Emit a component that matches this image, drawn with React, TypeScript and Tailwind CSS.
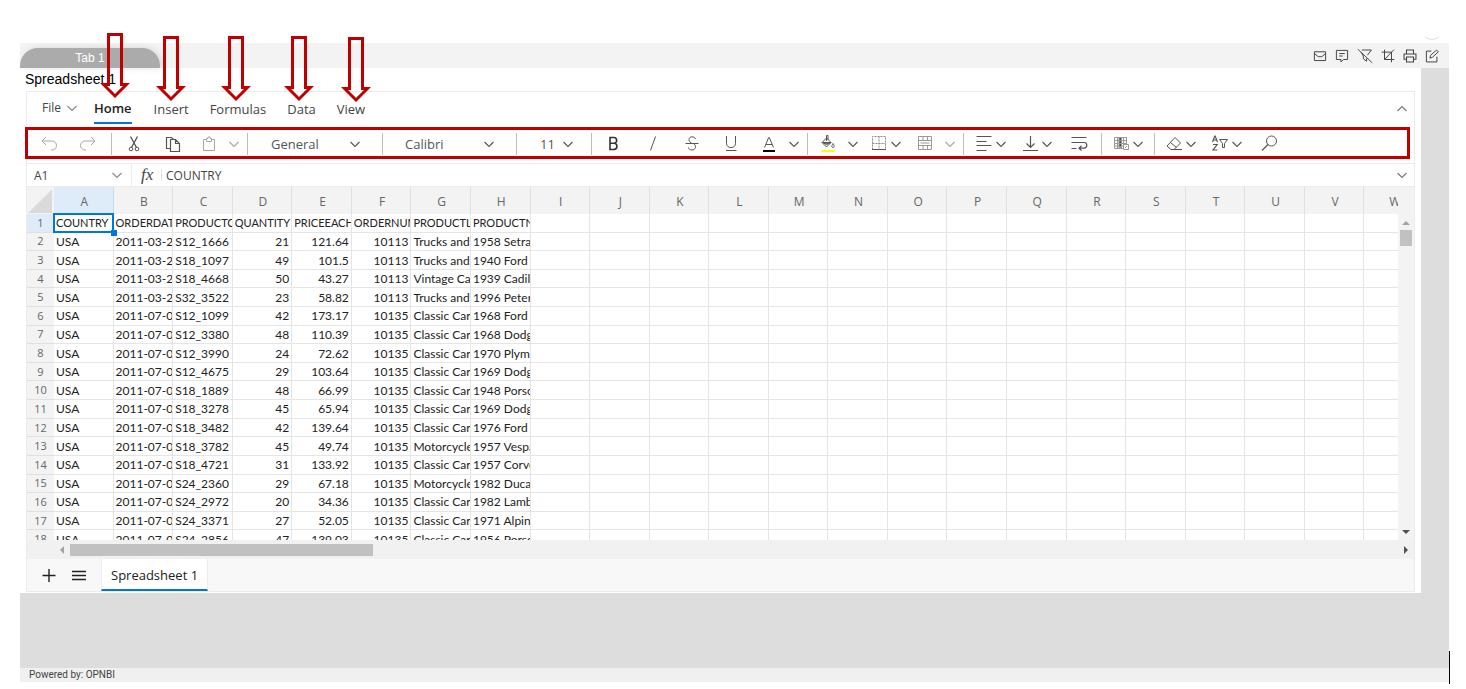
import type { ReactNode } from 'react'

type IconProps = { children: ReactNode; className?: string }

function Icon({ children, className = 'w-5 h-5' }: IconProps) {
  return (
    <svg viewBox="0 0 20 20" fill="none" stroke="currentColor" strokeWidth={1} className={className} aria-hidden="true">
      {children}
    </svg>
  )
}

function Chevron({ up = false }: { up?: boolean }) {
  return (
    <svg viewBox="0 0 14 14" fill="none" stroke="currentColor" className="w-3.5 h-3.5 shrink-0" aria-hidden="true">
      <path d={up ? 'M2.5 9 7 4.5 11.5 9' : 'M2.5 5 7 9.5 11.5 5'} strokeWidth={1.1} />
    </svg>
  )
}

function Tool({ label, className = '', children }: { label: string; className?: string; children: ReactNode }) {
  return (
    <button aria-label={label} className={`w-5 h-5 shrink-0 ${className}`}>
      <Icon>{children}</Icon>
    </button>
  )
}

function Drop({ label, className = '' }: { label: string; className?: string }) {
  return (
    <button aria-label={label} className={`w-3.5 h-5 shrink-0 flex items-center ${className}`}>
      <Chevron />
    </button>
  )
}

function Sep({ className }: { className: string }) {
  return <span className={`w-px h-[22px] shrink-0 bg-[#bdbdbd] ${className}`} />
}

function Picker({ label, value, className }: { label: string; value: string; className: string }) {
  return (
    <label className={`flex items-center shrink-0 text-[13px] ${className}`}>
      <select aria-label={label} defaultValue={value} className="appearance-none flex-1 min-w-0 pt-px bg-transparent outline-none">
        <option>{value}</option>
      </select>
      <Chevron />
    </label>
  )
}

function Toolbar() {
  return (
    <div className="-ml-0.5 mr-1 mt-0.5 h-8 pt-0.5 border-[3px] border-[#c00000] flex items-center overflow-hidden text-[#555]">
      <Tool label="Undo" className="ml-[11px] text-[#a6a6a6]">
        <path d="M7 3 3 7l4 4M3.2 7H13a4.500 4.500 0 0 1 0 9h-1" />
      </Tool>
      <Tool label="Redo" className="ml-[19px] text-[#a6a6a6]">
        <path d="M13 3l4 4-4 4M16.800 7H7a4.500 4.500 0 0 0 0 9h1" />
      </Tool>
      <Sep className="ml-[13px]" />
      <Tool label="Cut" className="ml-3">
        <path d="M6.500 2.500 12.500 13.500M13.500 2.500 7.500 13.500" strokeWidth={1.3} />
        <circle cx="7" cy="15" r="1.800" />
        <circle cx="13" cy="15" r="1.800" />
      </Tool>
      <Tool label="Copy" className="ml-[19px]">
        <path d="M7.500 14.500H3.500v-11h5l2 2M7.500 5.500h5l4 4v8h-9zM12.500 5.500v4h4" strokeWidth={1.2} />
      </Tool>
      <Tool label="Paste" className="ml-4 text-[#a6a6a6]">
        <path d="M7.500 5.500h-3v11h11v-11h-3M7.500 4.500h1.500v-1.500h2v1.500h1.500v3h-5z" />
      </Tool>
      <Drop label="Paste options" className="ml-2 text-[#a6a6a6]" />
      <Sep className="ml-1.5" />
      <Picker label="Number format" value="General" className="ml-[23px] w-[91px]" />
      <Sep className="ml-5" />
      <Picker label="Font family" value="Calibri" className="ml-[22px] w-[91px]" />
      <Sep className="ml-5" />
      <Picker label="Font size" value="11" className="ml-[23px] w-[35px]" />
      <Sep className="ml-4" />
      <Tool label="Bold" className="ml-3 text-[#333]">
        <path d="M6 3.500v12h4a3.200 3.200 0 0 0 .5-6.300A2.900 2.900 0 0 0 10 3.500zM6 9.200h4.500" strokeWidth={1.600} />
      </Tool>
      <Tool label="Italic" className="ml-[19px]">
        <path d="M12.500 2.500 7.500 16.500" />
      </Tool>
      <Tool label="Strikethrough" className="ml-[19px]">
        <path d="M13.500 5C13 2 7 2 7 5.500c0 2 1.500 3 3 4M3.500 9.500h13M12 10c3 2 1.500 6-2 6-2 0-3.500-1-3.500-2.500" />
      </Tool>
      <Tool label="Underline" className="ml-[19px]">
        <path d="M5.500 2v7.500c0 5.500 9 5.500 9 0V2M5 16.500h10.500" />
      </Tool>
      <Tool label="Text color" className="ml-[18px]">
        <path d="M5.500 13.500 9.700 3.500h.6L14.500 13.500M7 10.500h6" />
        <path d="M4 17h12" stroke="#000" strokeWidth={2} />
      </Tool>
      <Drop label="Text color options" className="ml-2" />
      <Sep className="ml-1.5" />
      <Tool label="Fill color" className="ml-2.5">
        <path d="M4 8.500 8.500 4l4.500 4.500L8.500 13zM8.500 7V1.500H10V6" />
        <path d="M4.500 8.500H13L8.500 10.500z" fill="#777" />
        <path d="M15 9.500c2 3 1 4 0 4s-2-1 0-4z" />
        <path d="M3.500 17h13" stroke="#ff0" strokeWidth={2} />
      </Tool>
      <Drop label="Fill color options" className="ml-2" />
      <Tool label="Borders" className="ml-[9px]">
        <path d="M3.500 15.500V2.500h13v13M10 2.500v13M3.500 9.500h13" stroke="#888" strokeDasharray="2 1" />
        <path d="M3 15.500h14" />
      </Tool>
      <Drop label="Border options" />
      <Tool label="Merge cells" className="ml-3 text-[#999]">
        <path d="M3.500 2.500h13v13h-13zM3.500 6.500h13M3.500 11.500h13M8 2.500v4M12.500 2.500v4M8 11.500v4M12.500 11.500v4M5.500 9h9" />
      </Tool>
      <Drop label="Merge options" className="ml-2 text-[#a6a6a6]" />
      <Sep className="ml-1.5" />
      <Tool label="Horizontal alignment" className="ml-2.5">
        <path d="M2.500 2.500h15M2.500 7.500h10M2.500 11.500h15M2.500 16.500h10" />
      </Tool>
      <Drop label="Horizontal alignment options" />
      <Tool label="Vertical alignment" className="ml-3">
        <path d="M10.500 2v11.500M6.500 9.500l4 4 4-4M3 16.500h15" strokeWidth={1.200} />
      </Tool>
      <Drop label="Vertical alignment options" />
      <Tool label="Wrap text" className="ml-[15px]">
        <path d="M2.500 3.500h15M2.500 8.500h12.500a2.800 2.800 0 0 1 0 5.600H10M2.500 14.500h5M12.500 11.800l-2.500 2.400 2.500 2.300" strokeWidth={1.200} />
      </Tool>
      <Sep className="ml-3" />
      <Tool label="Freeze panes" className="ml-[9px]">
        <path d="M3.500 3.500h12v11h-12zM3.500 6.500h12M3.500 9.500h12M3.500 12h12M6.500 3.500v11M12.500 3.500v11" stroke="#999" />
        <path d="M7.500 4h3.500v10H7.500z" fill="#999" stroke="none" />
        <path d="M8.500 5h1.500M8.500 8h1.500M8.500 11h1.500" stroke="#333" strokeWidth={1.500} />
        <path d="M12.500 10.500h5v5h-5zM14 14l2-2" fill="#fff" stroke="#999" />
      </Tool>
      <Drop label="Freeze options" />
      <Sep className="ml-[9px]" />
      <Tool label="Clear" className="ml-[9px]">
        <path d="M3 12 11 3.500l5.500 5.500L10 15.500H7zM6.500 8.500l6 5M9 15.500h9" />
      </Tool>
      <Drop label="Clear options" />
      <Tool label="Sort and filter" className="ml-3">
        <path d="M2.500 8 4.800 2h.4L7.500 8M3.200 6h3.600M3 10.500h4.200L3 16h4.500" strokeWidth={1.200} />
        <path d="M9.500 5.500h8l-3 4v4h-2v-4z" />
      </Tool>
      <Drop label="Sort options" />
      <Tool label="Find" className="ml-[15px]">
        <circle cx="12.500" cy="7" r="5" />
        <path d="M9 10.500 3 16.500" strokeWidth={1.200} />
      </Tool>
    </div>
  )
}

const columns = 'ABCDEFGHIJKLMNOPQRSTUVW'.split('')

const rows: string[][] = [
  ['COUNTRY', 'ORDERDATE', 'PRODUCTCODE', 'QUANTITY', 'PRICEEACH', 'ORDERNUMBER', 'PRODUCTLINE', 'PRODUCTNAME'],
  ['USA', '2011-03-26', 'S12_1666', '21', '121.64', '10113', 'Trucks and Buses', '1958 Setra Bus'],
  ['USA', '2011-03-26', 'S18_1097', '49', '101.5', '10113', 'Trucks and Buses', '1940 Ford Pickup'],
  ['USA', '2011-03-26', 'S18_4668', '50', '43.27', '10113', 'Vintage Cars', '1939 Cadillac'],
  ['USA', '2011-03-26', 'S32_3522', '23', '58.82', '10113', 'Trucks and Buses', '1996 Peterbilt'],
  ['USA', '2011-07-02', 'S12_1099', '42', '173.17', '10135', 'Classic Cars', '1968 Ford Mustang'],
  ['USA', '2011-07-02', 'S12_3380', '48', '110.39', '10135', 'Classic Cars', '1968 Dodge Charger'],
  ['USA', '2011-07-02', 'S12_3990', '24', '72.62', '10135', 'Classic Cars', '1970 Plymouth'],
  ['USA', '2011-07-02', 'S12_4675', '29', '103.64', '10135', 'Classic Cars', '1969 Dodge Charger'],
  ['USA', '2011-07-02', 'S18_1889', '48', '66.99', '10135', 'Classic Cars', '1948 Porsche'],
  ['USA', '2011-07-02', 'S18_3278', '45', '65.94', '10135', 'Classic Cars', '1969 Dodge'],
  ['USA', '2011-07-02', 'S18_3482', '42', '139.64', '10135', 'Classic Cars', '1976 Ford Gran'],
  ['USA', '2011-07-02', 'S18_3782', '45', '49.74', '10135', 'Motorcycles', '1957 Vespa'],
  ['USA', '2011-07-02', 'S18_4721', '31', '133.92', '10135', 'Classic Cars', '1957 Corvette'],
  ['USA', '2011-07-02', 'S24_2360', '29', '67.18', '10135', 'Motorcycles', '1982 Ducati'],
  ['USA', '2011-07-02', 'S24_2972', '20', '34.36', '10135', 'Classic Cars', '1982 Lamborghini'],
  ['USA', '2011-07-02', 'S24_3371', '27', '52.05', '10135', 'Classic Cars', '1971 Alpine'],
  ['USA', '2011-07-02', 'S24_2856', '47', '139.03', '10135', 'Classic Cars', '1956 Porsche'],
]

function Sheet() {
  return (
    <div className="flex-1 min-w-0 overflow-hidden h-[353px]">
      <table className="table-fixed border-separate border-spacing-0 w-[1397px] h-[362px]">
        <colgroup>
          <col className="w-[27px]" />
        </colgroup>
        <thead>
          <tr className="h-[27px] text-xs text-[#666]">
            <th aria-label="Select all" className="p-0 bg-[#f3f3f3]">
              <svg viewBox="0 0 27 26" className="w-[27px] h-[26px]" aria-hidden="true">
                <path d="M25 1.500V25H1z" fill="#dadada" />
              </svg>
            </th>
            {columns.map((c, i) => (
              <th
                key={c}
                scope="col"
                className={`p-0 pt-0.5 pl-0.5 font-medium border-r ${
                  i === 0 ? 'bg-[#deecf9] border-[#c9dcee]' : 'bg-[#f3f3f3] border-[#e0e0e0]'
                }`}
              >
                {c}
              </th>
            ))}
          </tr>
        </thead>
        <tbody>
          {rows.map((row, r) => (
            <tr key={r}>
              <th
                scope="row"
                className={`p-0 text-[11px] leading-4 font-medium text-[#666] border-b border-[#e0e0e0] ${
                  r === 0 ? 'bg-[#deecf9]' : 'bg-[#f3f3f3]'
                }`}
              >
                {r + 1}
              </th>
              {columns.map((c, i) => {
                const selected = r === 0 && i === 0
                const numeric = r > 0 && i >= 3 && i <= 5
                return (
                  <td
                    key={c}
                    className={`relative p-0 pt-px border-r border-b border-[#e5e5e5] font-['Lato',sans-serif] leading-4 text-[#222] ${
                      r === 0 ? 'text-[11px]' : 'text-[12px]'
                    } ${numeric ? 'text-right' : 'text-left'}`}
                  >
                    <div className="overflow-hidden whitespace-nowrap px-0.5 h-4">{row[i]}</div>
                    {selected && (
                      <>
                        <span className="absolute -inset-px border-2 border-[#0078d7]" />
                        <span className="absolute -right-1 -bottom-1 w-1.5 h-1.5 bg-[#0078d7] z-10" />
                      </>
                    )}
                  </td>
                )
              })}
            </tr>
          ))}
        </tbody>
      </table>
    </div>
  )
}

function Arrow({ className }: { className: string }) {
  return (
    <svg viewBox="0 0 30 66" className={`absolute w-[30px] h-[66px] pointer-events-none ${className}`} aria-hidden="true">
      <path d="M8.500 1.500h13v50h5L15 63 3.500 51.500h5z" fill="none" stroke="#c00000" strokeWidth={3} />
    </svg>
  )
}

function HeaderActions() {
  return (
    <div className="flex items-center gap-2 text-[#444]">
      <button aria-label="Mail">
        <Icon className="w-3.5 h-3.5">
          <path d="M2 4h16v12.500H2zM2 6.500l5.500 4.500h5L18 6.500" strokeWidth={1.400} />
        </Icon>
      </button>
      <button aria-label="Comment">
        <Icon className="w-3.5 h-3.5">
          <path d="M2 2h16v13h-6l-3.500 3.500V15H2zM6 6.500h8M6 10h5" strokeWidth={1.400} />
        </Icon>
      </button>
      <button aria-label="Clear filter">
        <Icon className="w-4 h-4">
          <path d="M1 1.500 19 18.500M6 2.500h12l-5 6.500M5 5l3 5v3.500l4 3V13" strokeWidth={1.200} />
        </Icon>
      </button>
      <button aria-label="Crop">
        <Icon className="w-3.5 h-3.5">
          <path d="M5 1v14h14M1 4.500h14V19M18.500 1 5 15" strokeWidth={1.400} />
        </Icon>
      </button>
      <button aria-label="Print">
        <Icon className="w-3.5 h-3.5">
          <path d="M5 7V1.500h10V7M5 14.500H1.500V7h17v7.500H15M5 11.500h10v7H5z" strokeWidth={1.500} />
        </Icon>
      </button>
      <button aria-label="Edit">
        <Icon className="w-3.5 h-3.5">
          <path d="M9 3H2v15.500h15V11M7 13l1-4 8.500-7.500 2.500 2.500L10.500 12z" strokeWidth={1.400} />
        </Icon>
      </button>
    </div>
  )
}

const menus = ['Insert', 'Formulas', 'Data', 'View']

export default function App() {
  return (
    <div className="relative min-h-screen bg-white pt-[43px] pl-5 pr-[17px] font-['Open_Sans',sans-serif] text-[#444]">
      <header className="h-[25px] bg-[#f3f3f3] flex items-end justify-between">
        <button className="w-[140px] h-5 rounded-t-[18px] bg-[#ababab] text-white text-[12px] leading-5 font-['Liberation_Sans',sans-serif] shadow-[2px_0_6px_rgba(0,0,0,0.12)]">
          Tab 1
        </button>
        <div className="h-[25px] flex items-center pr-2.5">
          <HeaderActions />
        </div>
      </header>

      <main className="bg-[#ddd] pr-7 pb-[75px]">
        <section className="bg-white pl-1.5 pr-1.5 pb-px">
          <h1 className="h-[23px] leading-[23px] -ml-px text-[14px] text-black font-['Liberation_Sans',sans-serif]">Spreadsheet 1</h1>

          <div className="border border-[#ececec]">
            <nav className="h-[33px] flex items-start text-[13px]">
              <button className="ml-[15px] h-8 flex items-center gap-1 text-[12px]">
                File
                <span className="text-[#888]">
                  <Chevron />
                </span>
              </button>
              <button className="ml-[15px] h-8 pt-1 font-semibold text-[#222] border-b-2 border-[#0078d7]">Home</button>
              <div className="ml-[22px] h-9 flex items-center gap-[21px]">
                {menus.map((m) => (
                  <button key={m}>{m}</button>
                ))}
              </div>
              <button aria-label="Collapse ribbon" className="ml-auto mr-[5px] h-[34px] flex items-center text-[#777]">
                <Chevron up />
              </button>
            </nav>

            <Toolbar />

            <div className="mt-1 h-6 border-y border-[#ececec] flex items-center">
              <label className="w-[105px] h-full pr-[7px] flex items-center border-r border-[#ececec]">
                <input aria-label="Name box" defaultValue="A1" className="w-full min-w-0 pt-0.5 pl-[7px] text-[12px] outline-none" />
                <span className="text-[#888]">
                  <Chevron />
                </span>
              </label>
              <span className="ml-[9px] w-[21px] h-3 leading-3 font-['Liberation_Serif',serif] italic text-[17px] border-r border-[#e0e0e0]">fx</span>
              <input aria-label="Formula" defaultValue="COUNTRY" className="flex-1 min-w-0 pt-0.5 pl-1 text-[12px] outline-none" />
              <button aria-label="Expand formula bar" className="mr-[5px] text-[#777]">
                <Chevron />
              </button>
            </div>

            <div className="flex">
              <Sheet />
              <div className="w-4 bg-[#f3f3f3] flex flex-col items-center pt-[34px] pb-1.5">
                <svg viewBox="0 0 8 4" className="w-2 h-1" aria-hidden="true">
                  <path d="M0 4 4 0l4 4z" fill="#a3a3a3" />
                </svg>
                <span className="mt-[5px] w-3 h-4 bg-[#c1c1c1]" />
                <svg viewBox="0 0 8 4" className="mt-auto w-2 h-1" aria-hidden="true">
                  <path d="M0 0h8L4 4z" fill="#505050" />
                </svg>
              </div>
            </div>

            <div className="h-[19px] bg-[#f1f1f1] flex items-center pl-[33px] pr-1.5">
              <svg viewBox="0 0 4 8" className="w-1 h-2" aria-hidden="true">
                <path d="M4 0v8L0 4z" fill="#a3a3a3" />
              </svg>
              <span className="ml-1.5 w-[22.5%] h-3 bg-[#c1c1c1]" />
              <svg viewBox="0 0 4 8" className="ml-auto w-1 h-2" aria-hidden="true">
                <path d="M0 0v8l4-4z" fill="#505050" />
              </svg>
            </div>

            <footer className="h-8 bg-[#f8f8f8] flex items-center text-[#222]">
              <button aria-label="Add sheet" className="ml-3">
                <Icon>
                  <path d="M10 4v13M3.500 10.500h13" strokeWidth={1.400} />
                </Icon>
              </button>
              <button aria-label="List sheets" className="ml-2.5">
                <Icon>
                  <path d="M3 6.500h14M3 10.500h14M3 14.500h14" strokeWidth={1.400} />
                </Icon>
              </button>
              <button className="ml-3 h-8 px-[9px] pt-1 bg-white border-x border-x-[#ececec] border-b-2 border-b-[#0078d7] text-[13px]">
                Spreadsheet 1
              </button>
            </footer>
          </div>
        </section>
      </main>

      <div className="h-3.5 pl-[9px] bg-[#f0f0f0] text-[10px] leading-3.5 font-['Roboto',sans-serif]">Powered by: OPNBI</div>

      <Arrow className="left-[100px] top-[33px]" />
      <Arrow className="left-[156px] top-9" />
      <Arrow className="left-[221px] top-9" />
      <Arrow className="left-[284px] top-9" />
      <Arrow className="left-[341px] top-[37px]" />
      <span className="absolute right-4 bottom-[5px] w-px h-[33px] bg-black" />
      <svg viewBox="0 0 16 3" className="absolute right-[26px] top-[37px] w-4 h-[3px]" aria-hidden="true">
        <path d="M1 0c4 3 10 3 14 0" fill="none" stroke="#ddd" />
      </svg>
    </div>
  )
}
